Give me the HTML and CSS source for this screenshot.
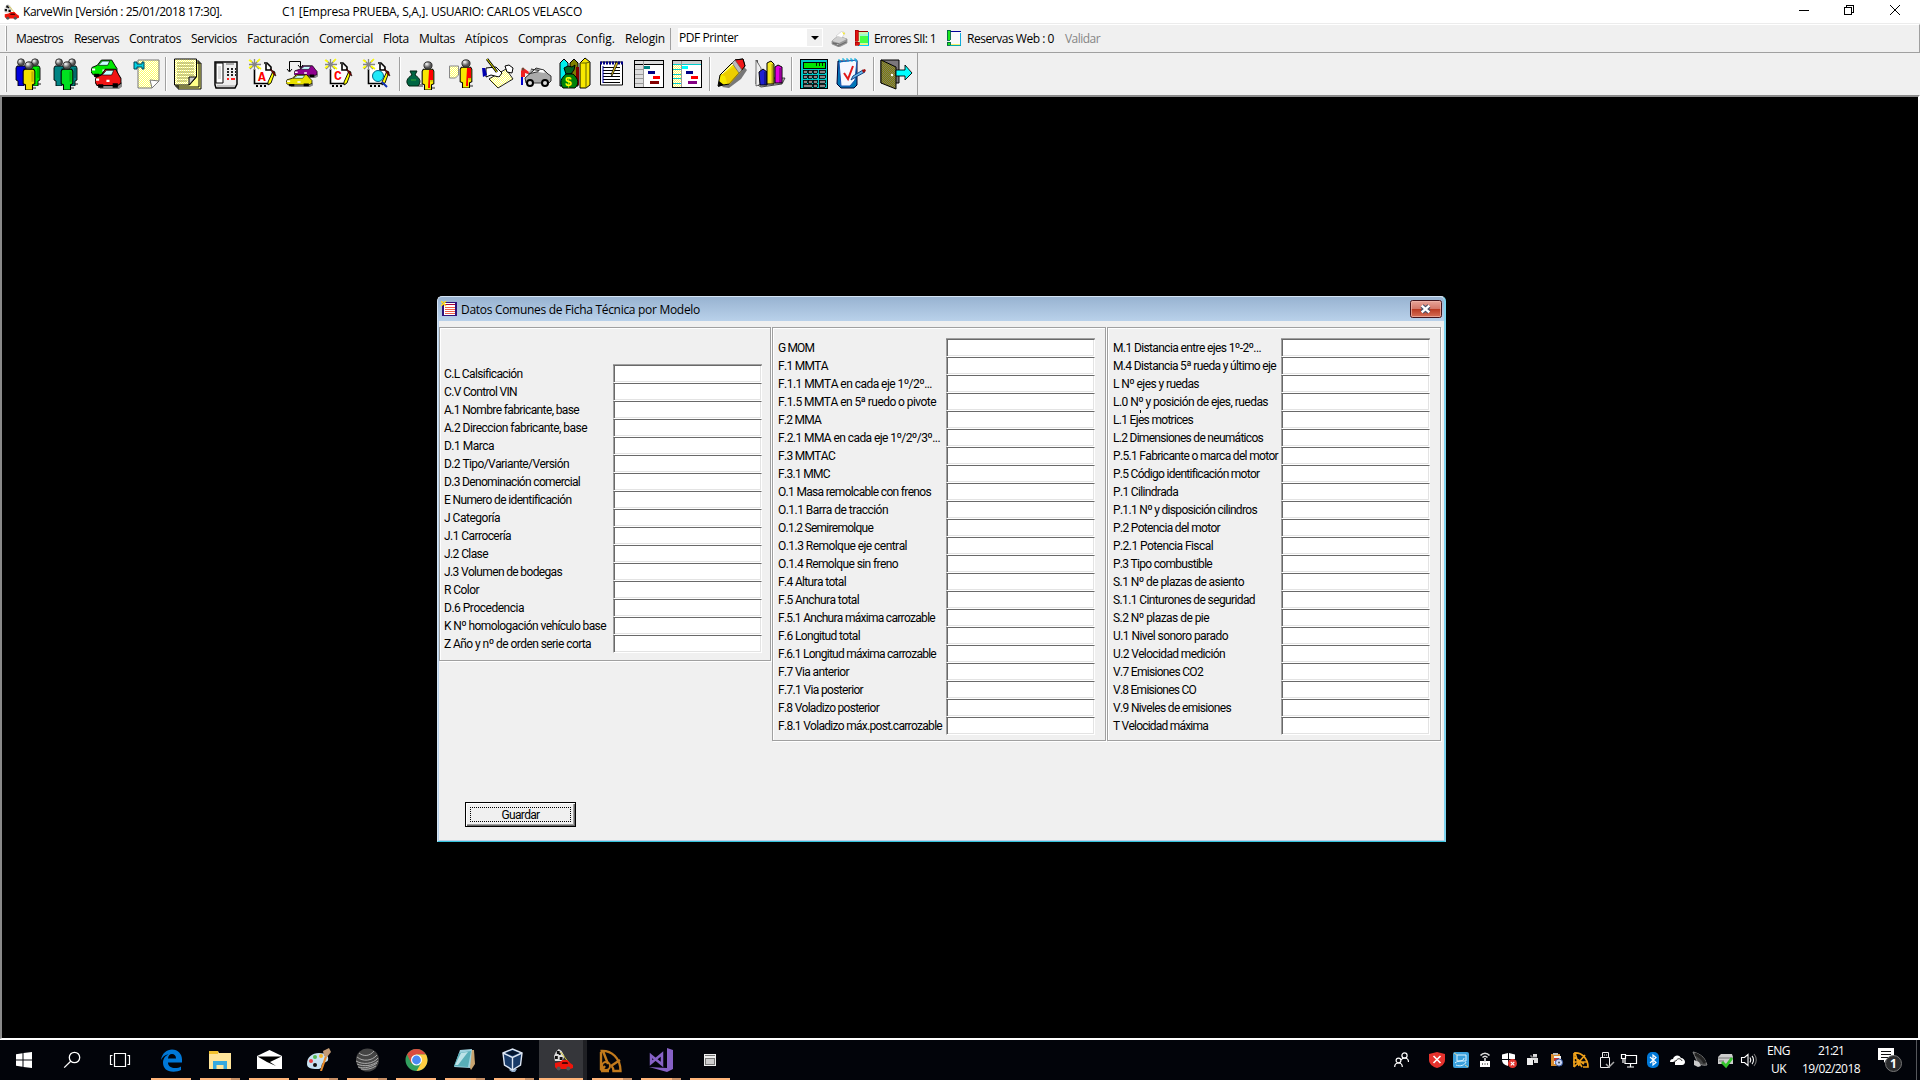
FILE: index.html
```html
<!DOCTYPE html>
<html lang="es">
<head>
<meta charset="utf-8">
<title>KarveWin</title>
<link rel="stylesheet" href="styles.css">
</head>
<body>
<svg class="defs" width="0" height="0" aria-hidden="true">
  <defs>
    <pattern id="dith" width="2" height="2" patternUnits="userSpaceOnUse"><rect width="2" height="2" fill="#ff6"/><path d="M0 0h1v1H0zM1 1h1v1H1z" fill="#fff"/></pattern>
    <pattern id="olive" width="2" height="2" patternUnits="userSpaceOnUse"><rect width="2" height="2" fill="#808000"/><path d="M0 0h1v1H0zM1 1h1v1H1z" fill="#807c68"/></pattern>
    <radialGradient id="ball" cx=".35" cy=".3"><stop offset="0" stop-color="#fff"/><stop offset=".5" stop-color="#a8a8a8"/><stop offset="1" stop-color="#555"/></radialGradient>
    <symbol id="person" viewBox="0 0 12 28" preserveAspectRatio="none"><path d="M8 25h4v2H8z" fill="#888"/><path d="M2 8h8l1 2v12l-2 1v5H3v-5l-2-1V10z" fill="currentColor" stroke="#000" stroke-width=".9"/><path d="M8 10h2v10H8z" fill="#000" opacity=".2"/><circle cx="6" cy="4.300" r="3.500" fill="url(#ball)" stroke="#222" stroke-width=".8"/></symbol>
    <symbol id="car" viewBox="0 0 26 18" preserveAspectRatio="none"><path d="M3 15h20l3-3v4l-3 2H5z" fill="#888"/><path d="M1 8l5-2 4-5h10l3 5 2 3v4l-3 2H2L0 12z" fill="currentColor" stroke="#000" stroke-width=".9"/><path d="M7 6l4-4h7l-2 4z" fill="#c8ffff" stroke="#000" stroke-width=".6"/><path d="M3 14h5v3H3zM17 13h5v4h-5z" fill="#000"/><path d="M1 9h3v2H1zM11 10h3v2h-3z" fill="#fff"/></symbol>
    <symbol id="newdoc" viewBox="0 0 32 32"><path d="M7 7h11l5 5v13H7z" fill="#fff"/><path d="M6.500 11v14.500H22M16 5h3l4 4v3h-5V6" fill="none" stroke="#000" stroke-width="1.600"/><path d="M20 24l5-11 2 1-4 11-3 2z" fill="#ff0" stroke="#000" stroke-width=".9"/><path d="M23 11l4 4 1 3-2-1-4-6z" fill="#800000" stroke="#000" stroke-width=".5"/><path d="M8 28h2M12 28h2M16 28h2" stroke="#000" stroke-width="2"/><path d="M6.500 1v11M1 6.500h12M2 2l9 9M11 2l-9 9" stroke="#848484" stroke-width="1.300"/><path d="M1 2l3 2M9 8l4 3M12 1l-3 3M1 10l3-2" stroke="#ff0" stroke-width="1.600"/></symbol>
    <symbol id="racer" viewBox="0 0 20 22" preserveAspectRatio="none"><path d="M2 3l3-3 3 2 3 5-2 5H1L0 7z" fill="#ddd"/><path d="M3 2h3v3H3zM1 7h3v3H1zM6 8h3v3H6zM5 4h2v2H5z" fill="#111"/><path d="M7 3l8 10" stroke="#d4c634"/><path d="M1 14l5-1 3-2h5l3 3 3 2v3l-3 1H3l-2-2z" fill="#f0140a"/><path d="M9 13h5l1 2H8z" fill="#500"/><circle cx="5" cy="19.500" r="2" fill="#555"/><circle cx="15" cy="19.500" r="2" fill="#555"/></symbol>
  </defs>
</svg>

<header class="titlebar">
  <svg class="app-icon" width="15" height="16"><use href="#racer"/></svg>
  <span class="ui" data-w="199">KarveWin [Versión : 25/01/2018 17:30].</span>
  <span class="ui company" data-w="300">C1 [Empresa PRUEBA, S,A,]. USUARIO: CARLOS VELASCO</span>
  <svg class="caption-buttons" width="121" height="24" shape-rendering="crispEdges" fill="none" stroke="#000"><path d="M0 10.500h10M45.500 7.500h7v7h-7zM47.500 7.500v-2h7v7h-2"/><path d="M91 5l10 10M101 5l-10 10" shape-rendering="auto"/></svg>
</header>

<nav class="menubar">
  <i class="grip"></i>
  <div class="menus ui">
    <span data-w="47">Maestros</span><span data-w="45">Reservas</span><span data-w="52">Contratos</span><span data-w="46">Servicios</span><span data-w="62">Facturación</span><span data-w="54">Comercial</span><span data-w="26">Flota</span><span data-w="36">Multas</span><span data-w="43">Atípicos</span><span data-w="48">Compras</span><span data-w="39">Config.</span><span data-w="40">Relogin</span>
  </div>
  <i class="vline"></i>
  <div class="combo ui"><span data-w="59">PDF Printer</span><b></b></div>
  <svg class="printer" width="17" height="16"><path d="M1 10l6-5 9 3v4l-8 4-7-3z" fill="#999" stroke="#777" stroke-width=".6"/><path d="M5 5l6-5 3 2-4 6z" fill="#fff" stroke="#bbb" stroke-width=".5"/><path d="M1 10l7 2 8-4-9-3z" fill="#cfcfcf"/><path d="M11 1l3 1-1 2z" fill="#f5e82a"/><path d="M2 12l6 3v-2zM9 14l6-3" stroke="#666" fill="#fff"/></svg>
  <svg class="flag f1" width="16" height="17" shape-rendering="crispEdges"><path d="M3 2h12v14H3z" fill="#fff"/><path d="M3 1.500h11" stroke="#900"/><path d="M4 2h10v12H4z" fill="#c8f7b0"/><path d="M6 5h8v8H6z" fill="#4f4"/><path d="M6 4h8v2H6z" fill="#a0f8d0"/><path d="M14.500 2v14" stroke="#0ad"/><path d="M4 15.500h11" stroke="#0cf"/><path d="M4 14.500h10" stroke="#f5f06a"/><path d="M1 0h3v11H1zM1 12h4v3H1z" fill="#e01010" stroke="#a00" stroke-width=".7"/></svg>
  <span class="ui errors" data-w="62">Errores SII: 1</span>
  <svg class="flag f2" width="16" height="17" shape-rendering="crispEdges"><path d="M3 2h12v14H3z" fill="#fafafa"/><path d="M4 1.500h11" stroke="#009"/><path d="M14.500 3v12" stroke="#1ad"/><path d="M4 15.500h11" stroke="#0aa"/><path d="M4 14.500h10" stroke="#f5f06a"/><path d="M1 0h3v10H1zM1 12h3v3H1z" fill="#1be81b" stroke="#064" stroke-width=".9"/></svg>
  <span class="ui web" data-w="87">Reservas Web : 0</span>
  <span class="ui validar" data-w="35">Validar</span>
</nav>

<div class="toolbar">
  <i class="grip"></i>
  <div class="tools">
    <svg><use href="#person" x="1" y="0" width="12" height="28" color="#00d"/><use href="#person" x="15" y="0" width="12" height="28" color="#0e0"/><use href="#person" x="8" y="3" width="14" height="29" color="#f0e000"/></svg>
    <svg><use href="#person" x="1" y="0" width="12" height="28" color="#008484"/><use href="#person" x="14" y="0" width="12" height="28" color="#008484"/><use href="#person" x="8" y="3" width="14" height="29" color="#00e020"/></svg>
    <svg><use href="#car" x="1" y="1" width="27" height="19" color="#00e800"/><use href="#car" x="5" y="10" width="27" height="21" color="#f01414"/></svg>
    <svg><path d="M10 2h21v21l-7 7H10z" fill="url(#dith)" stroke="#777"/><path d="M31 23l-9-1 2 8z" fill="#fff" stroke="#777"/><path d="M6 4h3v2h5V4h2v7h-2V9H9v2H6z" fill="#00d0e0" stroke="#045"/></svg>
    <i></i>
    <svg><path d="M6 5h23v26H6zM4 3h23v26H4z" fill="#ff8" stroke="#000"/><path d="M2.500 1h22v18l-7 8h-15z" fill="url(#dith)" stroke="#000"/><path d="M5 5h17M5 8h17M5 11h17M5 14h17M5 17h17M5 20h12M5 23h10" stroke="#9c9c50"/><path d="M24 19l-7 8v-8z" fill="#ccc" stroke="#000"/></svg>
    <svg><path d="M5 4h22v22l-2 4H6l-1-3z" fill="#eee" stroke="#000" stroke-width="1.500"/><path d="M6 5h7v20H6z" fill="#fff" stroke="#000"/><path d="M8 8h3v13H8z" fill="#ddd"/><path d="M16 6h8" stroke="#aaa" stroke-width="2"/><path d="M17 11h2M21 11h2M25 11h1M17 14h2M21 14h2M25 14h1M17 17h2M21 17h2M25 17h1" stroke="#222" stroke-width="2"/><path d="M17 21h2M21 21h4" stroke="#f22" stroke-width="2"/><path d="M7 28h18" stroke="#999"/></svg>
    <svg><use href="#newdoc"/><text class="glyph" x="10" y="23">A</text></svg>
    <svg><path d="M3.500 13V3.500h11V9M1 11l2.500 3L6 11M12 7l2.500 3L17 7" fill="none" stroke="#000"/><use href="#car" x="8" y="7" width="24" height="13" color="#900090"/><use href="#car" x="0" y="16" width="27" height="13" color="#e8e000"/></svg>
    <svg><use href="#newdoc"/><text class="glyph" x="10" y="22">C</text></svg>
    <svg><use href="#newdoc"/><path d="M20 24l5 5" stroke="#1030b0" stroke-width="2"/><circle cx="16" cy="18" r="5.500" fill="#20e8f8" stroke="#068"/></svg>
    <i></i>
    <svg><path d="M12 26h5v3h-5z" fill="#888"/><path d="M4 13h7l-2 4c6 4 6 7 3 11H3c-4-4-2-8 3-11z" fill="#064" stroke="#021"/><path d="M5 22h5" stroke="#3a3"/><use href="#person" x="15" y="3" width="14" height="29" color="#f8e800"/><path d="M23 12h4v10h-3v8h-2z" fill="#f00"/></svg>
    <svg><path d="M5.500 8h9v9l-3 3h-6z" fill="url(#dith)" stroke="#888"/><use href="#person" x="15" y="1" width="14" height="29" color="#f8e800"/><path d="M23 10h4v10h-3v8h-2z" fill="#f00"/></svg>
    <svg><path d="M7 21l17-10 7 10-15 9z" fill="url(#dith)" stroke="#222"/><path d="M4 10l10-1 6 6-3 4-8-2-5 2z" fill="#fff" stroke="#000"/><path d="M0 10h3l2 7-4 2z" fill="#0000b0"/><path d="M5 1l10 13" stroke="#000" stroke-width="2.600"/><path d="M5 1l10 13" stroke="#ee0"/><path d="M23 8l4-1 4 3-1 5-5-1z" fill="#fff" stroke="#000"/><path d="M12 23h2M16 20h2M20 18h2M18 24h2M22 21h2" stroke="#fff"/></svg>
    <svg><path d="M8 16l13-3-10-2M13 13l3-3 8 2 4 4 3 2v5l-2 2H6l-1-5z" fill="#aaa" stroke="#333"/><path d="M18 14l2-2h3l2 3z" fill="#fff"/><circle cx="10" cy="25" r="3" fill="#ddd" stroke="#000" stroke-width="2"/><circle cx="25" cy="25" r="3" fill="#ddd" stroke="#000" stroke-width="2"/><path d="M2 11h3l4 3-1 2-3-1v4H1v-6z" fill="#f02020"/><path d="M1 19h2v8H1z" fill="#00c"/><circle cx="3" cy="11" r="1.500" fill="#743"/></svg>
    <svg><path d="M2 5l4-4 4 4v23H2z" fill="#0ee" stroke="#000"/><path d="M12 5l4-4 4 4v23h-8z" fill="#808000" stroke="#000"/><path d="M18 9h3v18h-3z" fill="#800000"/><path d="M22 5l5-5 5 4v23l-4 3h-6z" fill="#f8e800" stroke="#000"/><path d="M22 5h6v25M28 5l4-1" fill="none" stroke="#660"/><path d="M6 10l4-2 4 1 3-2-1 5-3 4h-5z" fill="#062" stroke="#000"/><path d="M8 16h7c6 5 6 10 2 14H5c-4-5-2-10 3-14z" fill="#00820a" stroke="#000"/><text class="dollar" x="7" y="28">$</text></svg>
    <svg><path d="M4.500 4h22v23h-22z" fill="#fff" stroke="#000"/><path d="M4 5h23" stroke="#008" stroke-width="3" stroke-dasharray="2 1"/><path d="M7 9.500h17M7 12.500h17M7 15.500h17M7 18.500h17M7 21.500h17M7 24.500h17" stroke="#000"/><path d="M7 8v17" stroke="#00a"/><path d="M20 4l-5 13 1 1 6-13z" fill="#e8c820" stroke="#000" stroke-width=".7"/></svg>
    <svg shape-rendering="crispEdges"><path d="M.5 2.500h29v27H.5z" fill="#fff" stroke="#000"/><path d="M1 3h28v3H1zM1 7h8v22H1z" fill="#ddd"/><path d="M1 6.500h28" stroke="#000"/><path d="M9.500 3v26M1 11.500h8M1 16.500h8M1 20.500h8M1 25.500h8" stroke="#999"/><path d="M10 8h6v3h-6z" fill="#008484"/><path d="M14 13h7v3h-7z" fill="#000084"/><path d="M19 18h7v3h-7z" fill="#f00"/><path d="M16 23h9v3h-9z" fill="#840000"/></svg>
    <svg shape-rendering="crispEdges"><path d="M.5 2.500h29v27H.5z" fill="#fff" stroke="#000"/><path d="M1 3h28v3H1z" fill="#ccc"/><path d="M1 7h8v22H1z" fill="url(#dith)"/><path d="M1 6.500h28M1 11.500h8M1 16.500h8M1 20.500h8M1 25.500h8" stroke="#0cc"/><path d="M9.500 3v26" stroke="#999"/><path d="M10 8h6v3h-6z" fill="#0ff"/><path d="M14 13h7v3h-7z" fill="#000084"/><path d="M19 18h7v3h-7z" fill="#f00"/><path d="M16 23h9v3h-9z" fill="#840084"/></svg>
    <i></i>
    <svg><path d="M6 29l21-21 4 4-6 9-12 9z" fill="#777"/><path d="M2 28l2-11L19 2l8-1 2 7-16 18z" fill="#f6e800" stroke="#000"/><path d="M5 17l4 1 2 7 3 1 14-16-1-7z" fill="#e8c000" opacity=".65"/><path d="M19 2l8-1 2 7-4 5-3-6-6-2z" fill="#f01818" stroke="#000"/><path d="M16 5l3-3 7 10-3 3z" fill="#bbb" stroke="#555" stroke-width=".6"/><path d="M2 29l1-6 5 4z" fill="#000"/><path d="M6 16l11-10" stroke="#fff"/></svg>
    <svg><path d="M3 2l4 18h24l-3 6-21 3-5-3z" fill="#bbb" stroke="#222" stroke-width=".8"/><path d="M2 2l5 8v16l-5 2z" fill="#eee" stroke="#444" stroke-width=".7"/><path d="M5 14l4-3 4 3v13H6z" fill="#2020d0" stroke="#000"/><path d="M13 5l4-2 3 3v20h-7z" fill="#f4e820" stroke="#000"/><path d="M21 9l3-2 4 2v16h-7z" fill="#e000e0" stroke="#000"/><path d="M11 14v13M18.500 6v20M26 10v15" stroke="#000" opacity=".3" stroke-width="2"/></svg>
    <i></i>
    <svg shape-rendering="crispEdges"><path d="M2.500 1.500h27v29h-27z" fill="#00c8c8" stroke="#000"/><path d="M5 4h22v6H5z" fill="#00e400" stroke="#000"/><path d="M18 5v3M21 5v3M24 5v3" stroke="#020"/><path d="M5 12h4v3H5zM10 12h4v3h-4zM15 12h4v3h-4zM21 12h6v3h-6zM5 17h4v3H5zM10 17h4v3h-4zM15 17h4v3h-4zM21 17h6v3h-6zM5 22h4v3H5zM10 22h4v3h-4zM15 22h4v3h-4zM21 22h6v3h-6zM5 26h9v3H5zM15 26h4v3h-4zM21 26h6v3h-6z" fill="#8c8484" stroke="#000" stroke-width=".8"/></svg>
    <svg><path d="M2 3h19v24l-3 3H5L1 26z" fill="#0078b8" stroke="#003"/><path d="M3 4l18-2-2 20-5 6H5z" fill="#f4f8ff" stroke="#1850b0"/><path d="M2 2h2v3M6 1h2v3M10 1h2v3M14 1h2v3M18 1h2v3" fill="none" stroke="#0ad"/><path d="M8 15l4 6 5-13" fill="none" stroke="#e01818" stroke-width="2"/><path d="M15 22l2-4 10-6 2 2-11 6z" fill="#68b8e8" stroke="#148"/><path d="M26 12l3-1 1 2-3 2z" fill="#a01010"/></svg>
    <i></i>
    <svg><path d="M1 2h18v23H1z" fill="#7c787c" stroke="#000"/><path d="M1 2l15 7v22L1 25z" fill="url(#olive)" stroke="#000"/><circle cx="12" cy="17" r="1.200" fill="#fff"/><path d="M16 12h9V7l7 8-7 7v-4h-9z" fill="#0ff" stroke="#000" stroke-width=".9"/></svg>
  </div>
</div>

<main class="workspace">
  <section class="dialog">
    <header class="dialog-title">
      <svg width="16" height="16" shape-rendering="crispEdges"><path d="M2 1.500h13v13H2z" fill="#fff" stroke="#30107a" stroke-width="1.500"/><path d="M4 3.500h10" stroke="#b00038"/><path d="M4 6h10M4 8h10M4 10h10M4 12h10" stroke="#f06048"/><path d="M0 0l5 5M5 0L0 5" stroke="#fd2" stroke-width="1.500" shape-rendering="auto"/></svg>
      <span class="ui" data-w="239">Datos Comunes de Ficha Técnica por Modelo</span>
      <svg class="close" width="32" height="18"><defs><linearGradient id="red" x2="0" y2="1"><stop offset="0" stop-color="#e8a79c"/><stop offset=".48" stop-color="#d5786a"/><stop offset=".5" stop-color="#b83820"/><stop offset="1" stop-color="#d8735a"/></linearGradient></defs><rect x=".5" y=".5" width="31" height="17" rx="2" fill="url(#red)" stroke="#42141c"/><rect x="1.500" y="1.500" width="29" height="15" rx="1" fill="none" stroke="#f0b8ac" stroke-opacity=".7"/><path d="M12 6l7 6M19 6l-7 6" stroke="#45506a" stroke-width="4.500"/><path d="M11.700 5.700l7.600 6.600M19.300 5.700l-7.600 6.600" stroke="#fff" stroke-width="2.400"/></svg>
    </header>
    <div class="dialog-body">
      <fieldset class="group first" id="identificacion"></fieldset>
      <fieldset class="group" id="masas"></fieldset>
      <fieldset class="group" id="motor"></fieldset>
    </div>
    <button class="save"><span data-w="38">Guardar</span></button>
    <i class="ibeam"></i>
  </section>
</main>

<footer class="taskbar">
  <div class="system">
    <svg viewBox="0 0 48 40" fill="#fff"><path d="M16 14.300l6.500-1v6.200H16zM23.500 13.100L32 12v7.500h-8.500zM16 20.500h6.500v6.200l-6.500-1zM23.500 20.500H32V28l-8.500-1.100z"/></svg>
    <svg viewBox="0 0 48 40" fill="none" stroke="#fff" stroke-width="1.300"><circle cx="26.500" cy="17.500" r="5.200"/><path d="M22.700 21.300L16.200 27.600"/></svg>
    <svg viewBox="0 0 48 40" fill="none" stroke="#fff" stroke-width="1.200"><path d="M18.500 13.500h11v13h-11zM16.500 15.500h-2v9h2M31.500 15.500h2v9h-2"/></svg>
  </div>
  <div class="tasks">
    <div class="task"><svg viewBox="0 0 49 40"><path d="M14 20C15 13 20 9.500 25 9.500c6 0 10 4.500 10 10v3H21c0 4 3.500 5.500 7 5.500 2.500 0 4.500-.5 6-1.500V30c-2 1.200-4.500 1.700-7.500 1.700-7 0-10.500-4-10.500-9 0-4 2.300-7 5.500-8.500-4 .7-6 3-7.500 5.800zM21 18.500h8c0-3-1.600-4.500-4-4.500s-3.700 1.800-4 4.500z" fill="#0078d7"/></svg></div>
    <div class="task multi"><svg viewBox="0 0 49 40"><path d="M13 11h9l1 2h12v16H13z" fill="#ffe59a"/><path d="M13 11h9v3h-9z" fill="#f2c22e"/><path d="M17 21h14v8h-3.500v-4h-7v4H17z" fill="#35a9df"/></svg></div>
    <div class="task"><svg viewBox="0 0 49 40"><path d="M12 16l12.500-6L37 16v13H12z" fill="#fff"/><path d="M12.500 16.500h24L25 22l6 4-9-4z" fill="#000"/></svg></div>
    <div class="task multi"><svg viewBox="0 0 49 40"><path d="M13 24c0-7 5-11 12-11 7 0 10 3 9 7-1 3-5 2-6 4-1 3 0 5-5 5-6 0-10-1-10-5z" fill="#c7e2f2"/><circle cx="17" cy="21" r="2" fill="#e44"/><circle cx="21" cy="17" r="2" fill="#5b5"/><circle cx="27" cy="16" r="2" fill="#f5b52a"/><circle cx="21" cy="25" r="2" fill="#111"/><path d="M31 16l2 1-5 14h-2z" fill="#e88d2e"/><path d="M29 11l6-3 2 4-4 5-3-1z" fill="#c39b74"/></svg></div>
    <div class="task multi"><svg viewBox="0 0 49 40"><circle cx="24.500" cy="20" r="11.500" fill="#444"/><g fill="none" stroke="#b8b8b8" stroke-width=".9"><path d="M16 13c5 4 11 3 15-2M14 17c6 5 15 4 20-2M13 21c7 4 17 3 22-3M14 24c7 3 15 2 21-3M15 27c6 2 14 0 19-4M18 29c5 1 10 0 15-3"/></g></svg></div>
    <div class="task"><svg viewBox="0 0 49 40"><circle cx="24.500" cy="20" r="11" fill="#32a05f"/><path d="M24.500 20L15 14.500A11 11 0 0 1 34 14.500H24.500z" fill="#db4c3f"/><path d="M24.500 14.500H34A11 11 0 0 1 24.500 31l4.800-8.200z" fill="#ffce42"/><path d="M15 14.500l4.500 9L24.500 20z" fill="#db4c3f"/><circle cx="24.500" cy="20" r="5.500" fill="#fff"/><circle cx="24.500" cy="20" r="4.400" fill="#4a8af4"/></svg></div>
    <div class="task multi"><svg viewBox="0 0 49 40"><path d="M20 10h13l1 14-4 6z" fill="#c8a470"/><path d="M19 10l12-1-2 19-16-1z" fill="#9ed2df"/><path d="M18 13l12-2-3 16-14-1z" fill="#58aeb8"/><path d="M20 13l7-1-10 13h-3z" fill="#bce3e8"/></svg></div>
    <div class="task multi"><svg viewBox="0 0 49 40"><path d="M20 29l-1 1 3 2h3l2-3z" fill="#8fa9c8"/><path d="M13 13l9.500-4 9.500 4-1.500 12-8 5-8-5z" fill="#183a68" stroke="#dce6f4" stroke-width="1.400"/><path d="M13 13l9.500 4.500L32 13M22.500 17.500V30" fill="none" stroke="#dce6f4" stroke-width="1.400"/><path d="M16 13l6.500-2.500L29 13l-6.500 2.500z" fill="#04152e"/></svg></div>
    <div class="task active"><svg viewBox="0 0 49 40"><use href="#racer" x="15" y="9" width="19" height="22"/></svg></div>
    <div class="task multi"><svg viewBox="0 0 49 40"><path d="M12.500 11c11-1 20 7 20 20h-7c0-2-1-4-2-5M13 31h8M13 12v18M13 31l4-5M15 11l5 13M23 26l9-6" fill="none" stroke="#c27a1c" stroke-width="2.400"/><circle cx="18" cy="26" r="4" fill="none" stroke="#c27a1c" stroke-width="2"/></svg></div>
    <div class="task multi"><svg viewBox="0 0 49 40"><path d="M30 8l6 2v19l-6 3-18-5 18 1z" fill="#8661c5"/><path d="M14 15.500l11 9V14l-11 9z" fill="none" stroke="#8661c5" stroke-width="2.500"/></svg></div>
    <div class="task"><svg viewBox="0 0 49 40" shape-rendering="crispEdges"><path d="M18 14h12v12H18z" fill="#eee"/><path d="M19 15h10v1H19zM19 18h10v7H19z" fill="#777"/><path d="M20 19h8v5h-8z" fill="#ccc"/></svg></div>
  </div>
  <svg class="people" width="16" height="16" fill="none" stroke="#fff" stroke-width="1.200"><circle cx="10.500" cy="3.500" r="2.600"/><circle cx="4.500" cy="8.500" r="2.400"/><path d="M.7 15c0-2.500 1.600-4 3.800-4s3.800 1.500 3.800 4M7 8c1-1.500 2-2 3.500-2 2.500 0 4 1.800 4 4"/></svg>
  <div class="tray">
    <svg><path d="M8 0l8 2v6c0 4-4 7-8 8-4-1-8-4-8-8V2z" fill="#e5322d"/><path d="M4.500 4l7 7M11.500 4l-7 7" stroke="#fff" stroke-width="1.600"/></svg>
    <svg><rect width="16" height="16" rx="2" fill="#3aa0dc"/><path d="M4 3h9v6H4zM2 11c3-3 9-1 9-5M3 13c4 2 9 0 10-3" fill="none" stroke="#d9f2ff"/><path d="M1 1l3 2M12 13l3 2" stroke="#ddd59a"/></svg>
    <svg><path d="M3 9h10v6H3z" fill="#fff"/><path d="M5 12h1M7.500 12h1M10 12h1" stroke="#000"/><path d="M8 10V6M5.500 5.500c1.500-1.500 3.500-1.500 5 0M3.500 3.500c2.500-3 6.500-3 9 0" fill="none" stroke="#ddd" stroke-width="1.600"/></svg>
    <svg><path d="M1 2.500L7 1v6H1zM8 1l6 1.500V7H8zM1 8h6v6c-4-1-6-3-6-6zM8 8h6c0 3-2 5-6 6z" fill="#fff"/><circle cx="11.500" cy="11.500" r="4.500" fill="#e0352f"/><path d="M9.800 9.800l3.500 3.500M13.300 9.800l-3.500 3.500" stroke="#fff" stroke-width="1.200"/></svg>
    <svg><path d="M2 6h6v7H2z" fill="#eee"/><path d="M8 2h4v3H8zM7 6h6v5H9V8H7z" fill="#ddd"/><path d="M5 4h2v2M8 5h4" stroke="#aaa" fill="none"/></svg>
    <svg><path d="M2 2h9v12H2z" fill="#d98b2c"/><path d="M4 1h5v2H4z" fill="#bbb"/><path d="M5 4h7v8H5z" fill="#f5f5f5"/><path d="M5 6h5v3H5z" fill="#c33"/><circle cx="10" cy="10.500" r="3.600" fill="#ccd7f5" stroke="#3458a0"/><circle cx="10" cy="10.500" r="1" fill="#444"/></svg>
    <svg fill="none" stroke="#eda01a" stroke-width="1.700"><path d="M1 1c8-1 14 6 14 14h-5M1 1v14M2 1l4 13M1 5l10 7M0 10h15M6 10L12 3M1 15l5-5 3 5"/></svg>
    <svg fill="none" stroke="#eee"><path d="M5.500.5h6v5h-6zM3.500 5.500h9v10h-9zM7 3h1M9 3h1"/><path d="M9 12l3 3 5-5" stroke="#aaa" stroke-width="1.500"/></svg>
    <svg fill="none" stroke="#fff" stroke-width="1.200"><path d="M4 3.500h11.500v8H4V6M9.500 12v3M6 15h7M.5 2.500h4v4h-4zM2 7v4"/></svg>
    <svg><rect x="2" width="12" height="16" rx="5" fill="#0078d7"/><path d="M5 5l6 5.500L8 13V3l3 2.500L5 11" fill="none" stroke="#fff" stroke-width="1.200"/></svg>
    <svg><path d="M1 10c0-2 1-3 3-3 1-4 6-5 8-1 2 0 4 2 4 4 0 1-1 3-3 3H6v-3z" fill="#fff"/><path d="M4 12c0-2 1-3 3-3 1-3 5-3 6 0" fill="none" stroke="#000" stroke-width=".8"/></svg>
    <svg><path d="M0 0c5 1 10 4 12 8l2 5c-5 1-8-1-10-4z" fill="#444" stroke="#888"/><path d="M2 2c5 2 8 5 10 9" stroke="#222" stroke-width="3" fill="none"/><path d="M1 8l5 2 2 4-3 1-4-2z" fill="#ccc"/></svg>
    <svg><path d="M1 5l3-3h11l1 3v7H1z" fill="#ccc"/><path d="M1 6h15M2 9h5" stroke="#777"/><path d="M5 10l4 4 6-8" fill="none" stroke="#34c42c" stroke-width="2.800"/></svg>
    <svg fill="none" stroke="#fff" stroke-width="1.100"><path d="M.5 5.500h3l3.500-3v11l-3.500-3h-3zM9 5.500c1 1.500 1 3.500 0 5M11 4c2 2 2 6 0 8"/><path d="M13 2c3 3.500 3 8.500 0 12" stroke="#777"/></svg>
  </div>
  <div class="lang ui"><span data-w="23">ENG</span><span data-w="15">UK</span></div>
  <div class="clock ui"><span data-w="26">21:21</span><span data-w="58">19/02/2018</span></div>
  <svg class="notice" width="28" height="30"><path d="M1 3h16v12H9l-2 3v-3H1z" fill="#fff"/><path d="M4 6.500h10M4 9.500h10M4 12.500h8" stroke="#111"/><circle cx="16.500" cy="18.500" r="8" fill="#2a2b2d" stroke="#777"/><text class="count" x="13" y="23">1</text></svg>
  <i class="show-desktop"></i>
</footer>
<script src="app.js"></script>
</body>
</html>
```
FILE: styles.css
```css
* { box-sizing: border-box; }
body { margin: 0; width: 1920px; height: 1080px; overflow: hidden; display: flex; flex-direction: column; background: #000; color: #000; font: 12px/18px Roboto, "Liberation Sans", sans-serif; font-kerning: none; }
svg { display: block; flex: none; }
.defs { position: absolute; }
.ui { font-family: "Open Sans", "Noto Sans", sans-serif; font-size: 12px; }
span { white-space: nowrap; }

.titlebar { height: 24px; flex: none; display: flex; align-items: center; background: #fff; border-bottom: 1px solid #ececec; padding-left: 4px; }
.app-icon { margin-right: 4px; }
.company { margin-left: 60px; }
.caption-buttons { margin-left: auto; }

.menubar { height: 29px; flex: none; display: flex; align-items: center; background: #f0f0f0; border-top: 1px solid #fff; border-bottom: 1px solid #a0a0a0; border-right: 1px solid #a0a0a0; }
.grip { width: 2px; margin-left: 5px; border-left: 1px solid #fff; border-right: 1px solid #a0a0a0; flex: none; height: 25px; }
.menus { display: grid; grid-template-columns: 58px 55px 62px 56px 72px 64px 36px 46px 53px 58px 49px 45px; padding-left: 9px; }
.vline { width: 1px; height: 22px; background: #a0a0a0; }
.combo { width: 145px; height: 19px; margin: 0 0 2px 7px; background: #fff; display: flex; align-items: center; padding-left: 1px; }
.combo span { flex: 1; }
.combo b { width: 15px; height: 17px; margin-right: 1px; background: #f0f0f0; display: grid; place-items: center; }
.combo b::after { content: ""; border: 4px solid transparent; border-top-color: #000; border-bottom: 0; }
.printer { margin-left: 8px; }
.flag { margin-left: 6px; }
.errors { margin-left: 4px; width: 62px; }
.f2 { margin-left: 10px; }
.web { margin-left: 5px; width: 87px; }
.validar { margin-left: 11px; color: #858585; }

.toolbar { height: 42px; flex: none; display: flex; align-items: center; background: #f0f0f0; }
.toolbar .grip { height: 36px; }
.tools { height: 42px; width: 911px; display: flex; align-items: center; padding-left: 4px; border-right: 1px solid #a0a0a0; }
.tools svg { width: 32px; height: 32px; margin: 0 3px; overflow: visible; }
.tools i { width: 6px; height: 34px; background: linear-gradient(90deg, transparent 2px, #a0a0a0 2px 3px, #fff 3px 4px, transparent 4px); flex: none; }
.glyph { font: bold 13px "Liberation Mono", monospace; fill: #f00; }
.dollar { font: bold 12px "Liberation Sans", sans-serif; fill: #ff0; }

.workspace { flex: 1; border: 2px solid; border-color: #8a8a8a #fff #fff #8a8a8a; background: #000; position: relative; border-bottom-width: 1px; }
/* MDI child window, placed freely on the workspace */
.dialog { position: absolute; left: 435px; top: 199px; width: 1009px; height: 546px; background: #f0f0f0; border: 1px solid #d5e4f4; border-right: 2px solid #7fd3ee; border-bottom: 1px solid #35c3dc; border-radius: 5px 5px 0 0; box-shadow: inset 1px -1px #b9d1ea; display: flex; flex-direction: column; align-items: flex-start; }
.dialog-title { width: 100%; height: 24px; flex: none; display: flex; align-items: center; padding: 0 2px 0 3px; background: linear-gradient(#98b3d1, #b9d1ea); border-radius: 4px 4px 0 0; }
.dialog-title svg:first-child { margin-bottom: 1px; }
.dialog-title span { margin: 2px 0 0 4px; }
.close { margin-left: auto; margin-bottom: 1px; }
.dialog-body { display: flex; align-items: flex-start; gap: 1px; margin: 6px 0 0 1px; }
.group { border: 1px solid #a0a0a0; box-shadow: inset 1px 1px #fff, 1px 1px #fff; margin: 0; padding: 10px 10px 5px 5px; width: 334px; min-width: 0; }
.group.first { width: 332px; padding: 36px 8px 7px 4px; }
.row { height: 18px; display: flex; justify-content: space-between; align-items: flex-start; line-height: 18px; }
.row i { width: 149px; height: 18px; background: #fff; border-top: 1px solid #696969; border-left: 1px solid #a0a0a0; border-bottom: 1px solid #fff; border-right: 1px solid #fff; box-shadow: inset 1px 0 #696969, inset -1px -1px #e3e3e3; }
.row:first-child { height: 19px; padding-top: 1px; background: linear-gradient(#a0a0a0, #a0a0a0) right top / 149px 1px no-repeat; }
.save { margin: auto 0 14px 27px; width: 111px; height: 25px; padding: 4px; background: #f0f0f0; border: 1px solid #000; box-shadow: inset 1px 1px #fff, inset -1px -1px #696969, inset -2px -2px #a0a0a0; font: inherit; color: #000; border-radius: 0; }
.save span { display: block; height: 15px; line-height: 14px; border: 1px dotted #000; }
/* text pointer resting over the third group */
.ibeam { position: absolute; left: 702px; top: 113px; width: 1px; height: 3px; background: #000; }

.taskbar { height: 41px; flex: none; display: flex; align-items: center; background: #02040a; color: #fff; border-top: 1px solid #fff; }
.system { display: flex; width: 147px; }
.system svg { width: 48px; height: 40px; }
.tasks { display: flex; }
.task { width: 49px; height: 40px; position: relative; }
.task svg { width: 49px; height: 40px; }
.task::after { content: ""; position: absolute; left: 4px; bottom: 0; width: 40px; height: 2px; background: #ffb57a; }
.task.multi::after { background: linear-gradient(90deg, #ffb57a 31px, #c78f65 31px); }
.task.active { background: linear-gradient(90deg, #35363a 44px, #1f2024 44px 48px, transparent 48px); }
.task.active::after { left: 0; width: 44px; }
.people { margin-left: 659px; }
.tray { display: grid; grid-template-columns: repeat(14, 24px); margin-left: 15px; justify-items: center; }
.tray svg { width: 16px; height: 16px; overflow: visible; }
.lang, .clock { display: flex; flex-direction: column; align-items: center; line-height: 18px; margin-bottom: 1px; }
.lang { margin-left: 6px; width: 23px; }
.clock { margin-left: 12px; width: 58px; }
.notice { margin-left: 17px; }
.count { font: bold 12px "Open Sans", sans-serif; fill: #fff; }
.show-desktop { margin: 0 3px 0 auto; width: 1px; height: 40px; background: #55575b; }
```
FILE: app.js
```js
// Each entry: label text and its drawn width in pixels.
const groups = {
  identificacion: [
    ["C.L Calsificación", 78], ["C.V Control VIN", 73], ["A.1 Nombre fabricante, base", 135],
    ["A.2 Direccion fabricante, base", 143], ["D.1 Marca", 50], ["D.2 Tipo/Variante/Versión", 125],
    ["D.3 Denominación comercial", 136], ["E Numero de identificación", 127], ["J Categoría", 56],
    ["J.1 Carrocería", 67], ["J.2 Clase", 44], ["J.3 Volumen de bodegas", 118], ["R Color", 35],
    ["D.6 Procedencia", 80], ["K Nº homologación vehículo base", 162], ["Z Año y nº de orden serie corta", 147]
  ],
  masas: [
    ["G MOM", 36], ["F.1 MMTA", 50], ["F.1.1 MMTA en cada eje 1º/2º...", 154], ["F.1.5 MMTA en 5ª ruedo o pivote", 158],
    ["F.2 MMA", 43], ["F.2.1 MMA en cada eje 1º/2º/3º...", 162], ["F.3 MMTAC", 57], ["F.3.1 MMC", 52],
    ["O.1 Masa remolcable con frenos", 153], ["O.1.1 Barra de tracción", 110], ["O.1.2 Semiremolque", 95],
    ["O.1.3 Remolque eje central", 129], ["O.1.4 Remolque sin freno", 120], ["F.4 Altura total", 68],
    ["F.5 Anchura total", 81], ["F.5.1 Anchura máxima carrozable", 157], ["F.6 Longitud total", 82],
    ["F.6.1 Longitud máxima carrozable", 158], ["F.7 Via anterior", 71], ["F.7.1 Via posterior", 85],
    ["F.8 Voladizo posterior", 101], ["F.8.1 Voladizo máx.post.carrozable", 164]
  ],
  motor: [
    ["M.1 Distancia entre ejes 1º-2º...", 148], ["M.4 Distancia 5ª rueda y último eje", 163], ["L Nº ejes y ruedas", 86],
    ["L.0 Nº y posición de ejes, ruedas", 155], ["L.1 Ejes motrices", 80], ["L.2 Dimensiones de neumáticos", 150],
    ["P.5.1 Fabricante o marca del motor", 165], ["P.5 Código identificación motor", 146], ["P.1 Cilindrada", 65],
    ["P.1.1 Nº y disposición cilindros", 144], ["P.2 Potencia del motor", 107], ["P.2.1 Potencia Fiscal", 100],
    ["P.3 Tipo combustible", 99], ["S.1 Nº de plazas de asiento", 131], ["S.1.1 Cinturones de seguridad", 142],
    ["S.2 Nº plazas de pie", 96], ["U.1 Nivel sonoro parado", 115], ["U.2 Velocidad medición", 112],
    ["V.7 Emisiones CO2", 90], ["V.8 Emisiones CO", 83], ["V.9 Niveles de emisiones", 118], ["T Velocidad máxima", 95]
  ]
};

for (const [id, rows] of Object.entries(groups)) {
  const box = document.getElementById(id);
  for (const [text, width] of rows) {
    const row = document.createElement("div");
    row.className = "row";
    const label = document.createElement("span");
    label.textContent = text;
    label.dataset.w = width;
    row.append(label, document.createElement("i"));
    box.append(row);
  }
}

// Tracks every label so that it takes its given width.
for (const el of document.querySelectorAll("[data-w]")) {
  const range = document.createRange();
  range.selectNodeContents(el);
  const natural = range.getBoundingClientRect().width;
  el.style.letterSpacing = (el.dataset.w - natural) / el.textContent.length + "px";
}
```
